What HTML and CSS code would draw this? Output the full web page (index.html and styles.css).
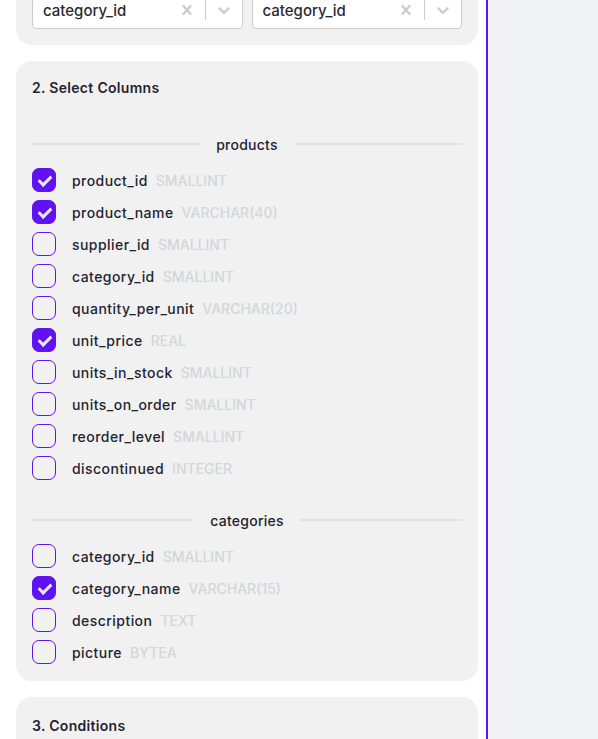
FILE: index.html
```html
<!DOCTYPE html>
<html lang="en">
<head>
<meta charset="utf-8">
<title>Query builder</title>
<link rel="stylesheet" href="styles.css">
</head>
<body>
<div class="layout">
  <div class="builder">
    <section class="panel panel-top">
      <div class="selects">
        <div class="select">
          <span class="select-value">category_id</span>
          <span class="indicator"><svg viewBox="0 0 20 20" width="20" height="20"><path d="M14.348 14.849c-0.469 0.469-1.229 0.469-1.697 0l-2.651-3.030-2.651 3.029c-0.469 0.469-1.229 0.469-1.697 0-0.469-0.469-0.469-1.229 0-1.697l2.758-3.15-2.759-3.152c-0.469-0.469-0.469-1.228 0-1.697s1.228-0.469 1.697 0l2.652 3.031 2.651-3.031c0.469-0.469 1.228-0.469 1.697 0s0.469 1.229 0 1.697l-2.758 3.152 2.758 3.15c0.469 0.469 0.469 1.229 0 1.698z"/></svg></span>
          <span class="sep"></span>
          <span class="indicator"><svg viewBox="0 0 20 20" width="20" height="20"><path d="M4.516 7.548c0.436-0.446 1.043-0.481 1.576 0l3.908 3.747 3.908-3.747c0.533-0.481 1.141-0.446 1.574 0 0.436 0.445 0.408 1.197 0 1.615-0.406 0.418-4.695 4.502-4.695 4.502-0.217 0.223-0.502 0.335-0.787 0.335s-0.57-0.112-0.789-0.335c0 0-4.287-4.084-4.695-4.502s-0.436-1.17 0-1.615z"/></svg></span>
        </div>
        <div class="select">
          <span class="select-value">category_id</span>
          <span class="indicator"><svg viewBox="0 0 20 20" width="20" height="20"><path d="M14.348 14.849c-0.469 0.469-1.229 0.469-1.697 0l-2.651-3.030-2.651 3.029c-0.469 0.469-1.229 0.469-1.697 0-0.469-0.469-0.469-1.229 0-1.697l2.758-3.15-2.759-3.152c-0.469-0.469-0.469-1.228 0-1.697s1.228-0.469 1.697 0l2.652 3.031 2.651-3.031c0.469-0.469 1.228-0.469 1.697 0s0.469 1.229 0 1.697l-2.758 3.152 2.758 3.15c0.469 0.469 0.469 1.229 0 1.698z"/></svg></span>
          <span class="sep"></span>
          <span class="indicator"><svg viewBox="0 0 20 20" width="20" height="20"><path d="M4.516 7.548c0.436-0.446 1.043-0.481 1.576 0l3.908 3.747 3.908-3.747c0.533-0.481 1.141-0.446 1.574 0 0.436 0.445 0.408 1.197 0 1.615-0.406 0.418-4.695 4.502-4.695 4.502-0.217 0.223-0.502 0.335-0.787 0.335s-0.57-0.112-0.789-0.335c0 0-4.287-4.084-4.695-4.502s-0.436-1.17 0-1.615z"/></svg></span>
        </div>
      </div>
    </section>

    <section class="panel panel-columns">
      <h2 class="panel-title">2. Select Columns</h2>

      <div class="divider divider-first"><span>products</span></div>
      <ul class="cols">
        <li class="col"><span class="box checked"></span><span class="name">product_id</span><span class="type">SMALLINT</span></li>
        <li class="col"><span class="box checked"></span><span class="name">product_name</span><span class="type">VARCHAR(40)</span></li>
        <li class="col"><span class="box"></span><span class="name">supplier_id</span><span class="type">SMALLINT</span></li>
        <li class="col"><span class="box"></span><span class="name">category_id</span><span class="type">SMALLINT</span></li>
        <li class="col"><span class="box"></span><span class="name">quantity_per_unit</span><span class="type">VARCHAR(20)</span></li>
        <li class="col"><span class="box checked"></span><span class="name">unit_price</span><span class="type">REAL</span></li>
        <li class="col"><span class="box"></span><span class="name">units_in_stock</span><span class="type">SMALLINT</span></li>
        <li class="col"><span class="box"></span><span class="name">units_on_order</span><span class="type">SMALLINT</span></li>
        <li class="col"><span class="box"></span><span class="name">reorder_level</span><span class="type">SMALLINT</span></li>
        <li class="col"><span class="box"></span><span class="name">discontinued</span><span class="type">INTEGER</span></li>
      </ul>

      <div class="divider divider-next"><span>categories</span></div>
      <ul class="cols">
        <li class="col"><span class="box"></span><span class="name">category_id</span><span class="type">SMALLINT</span></li>
        <li class="col"><span class="box checked"></span><span class="name">category_name</span><span class="type">VARCHAR(15)</span></li>
        <li class="col"><span class="box"></span><span class="name">description</span><span class="type">TEXT</span></li>
        <li class="col"><span class="box"></span><span class="name">picture</span><span class="type">BYTEA</span></li>
      </ul>
    </section>

    <section class="panel panel-conditions">
      <h2 class="panel-title">3. Conditions</h2>
    </section>
  </div>
  <aside class="preview"></aside>
</div>
</body>
</html>
```

FILE: styles.css
```css
* { box-sizing: border-box; }

html, body {
  margin: 0;
  padding: 0;
  height: 100%;
  overflow: hidden;
}

body {
  font-family: Inter, "Noto Sans", sans-serif;
  font-size: 14px;
  font-weight: 500;
  color: #1f2430;
  background: #ffffff;
}

.layout {
  display: flex;
  height: 739px;
}

.builder {
  width: 486px;
  flex: none;
  padding: 0 8px 0 16px;
  margin-top: -25px;
  display: flex;
  flex-direction: column;
  gap: 16px;
}

.preview {
  flex: 1;
  background: #f2f3f5;
  border-left: 2px solid #6013f2;
}

.panel {
  background: #f1f1f1;
  border-radius: 16px;
  padding: 16px;
}

.panel-columns { padding-bottom: 17px; }
.panel-conditions { padding-top: 18px; }

.selects {
  display: grid;
  grid-template-columns: 1fr 1fr;
  gap: 9px;
}

.select {
  display: flex;
  align-items: center;
  height: 38px;
  background: #fff;
  border: 1px solid #cccccc;
  border-radius: 4px;
  padding-left: 10px;
}

.select-value {
  flex: 1;
  font-size: 15px;
  color: #2a2a33;
}

.indicator {
  width: 36px;
  height: 36px;
  display: flex;
  align-items: center;
  justify-content: center;
}

.indicator svg { fill: #cccccc; }

.sep {
  width: 1px;
  align-self: stretch;
  margin: 8px 0;
  background: #cccccc;
}

.panel-title {
  margin: 0;
  font-size: 14px;
  font-weight: 600;
  line-height: 22px;
  letter-spacing: 0.3px;
}

.divider {
  display: flex;
  align-items: center;
  gap: 16px;
  height: 24px;
  font-size: 14px;
  letter-spacing: 0.25px;
}

.divider::before,
.divider::after {
  content: "";
  flex: 1;
  height: 2px;
  background: #e2e2e2;
}

.divider-first { margin-top: 33px; }
.divider-next { margin-top: 28px; }

.cols {
  list-style: none;
  margin: 12px 0 0;
  padding: 0;
  display: flex;
  flex-direction: column;
  gap: 8px;
}

.col {
  display: flex;
  align-items: center;
  height: 24px;
}

.box {
  width: 24px;
  height: 24px;
  border: 1.5px solid #6013f2;
  border-radius: 7px;
  margin-right: 16px;
  flex: none;
  position: relative;
}

.box.checked {
  background: #6013f2;
}

.box.checked::after {
  content: "";
  position: absolute;
  left: 7.5px;
  top: 3.5px;
  width: 5px;
  height: 10px;
  border-right: 3px solid #ece6fd;
  border-bottom: 3px solid #ece6fd;
  transform: rotate(45deg);
}

.name {
  margin-right: 8px;
  letter-spacing: 0.45px;
}

.type {
  color: #d3d6dd;
}
```
